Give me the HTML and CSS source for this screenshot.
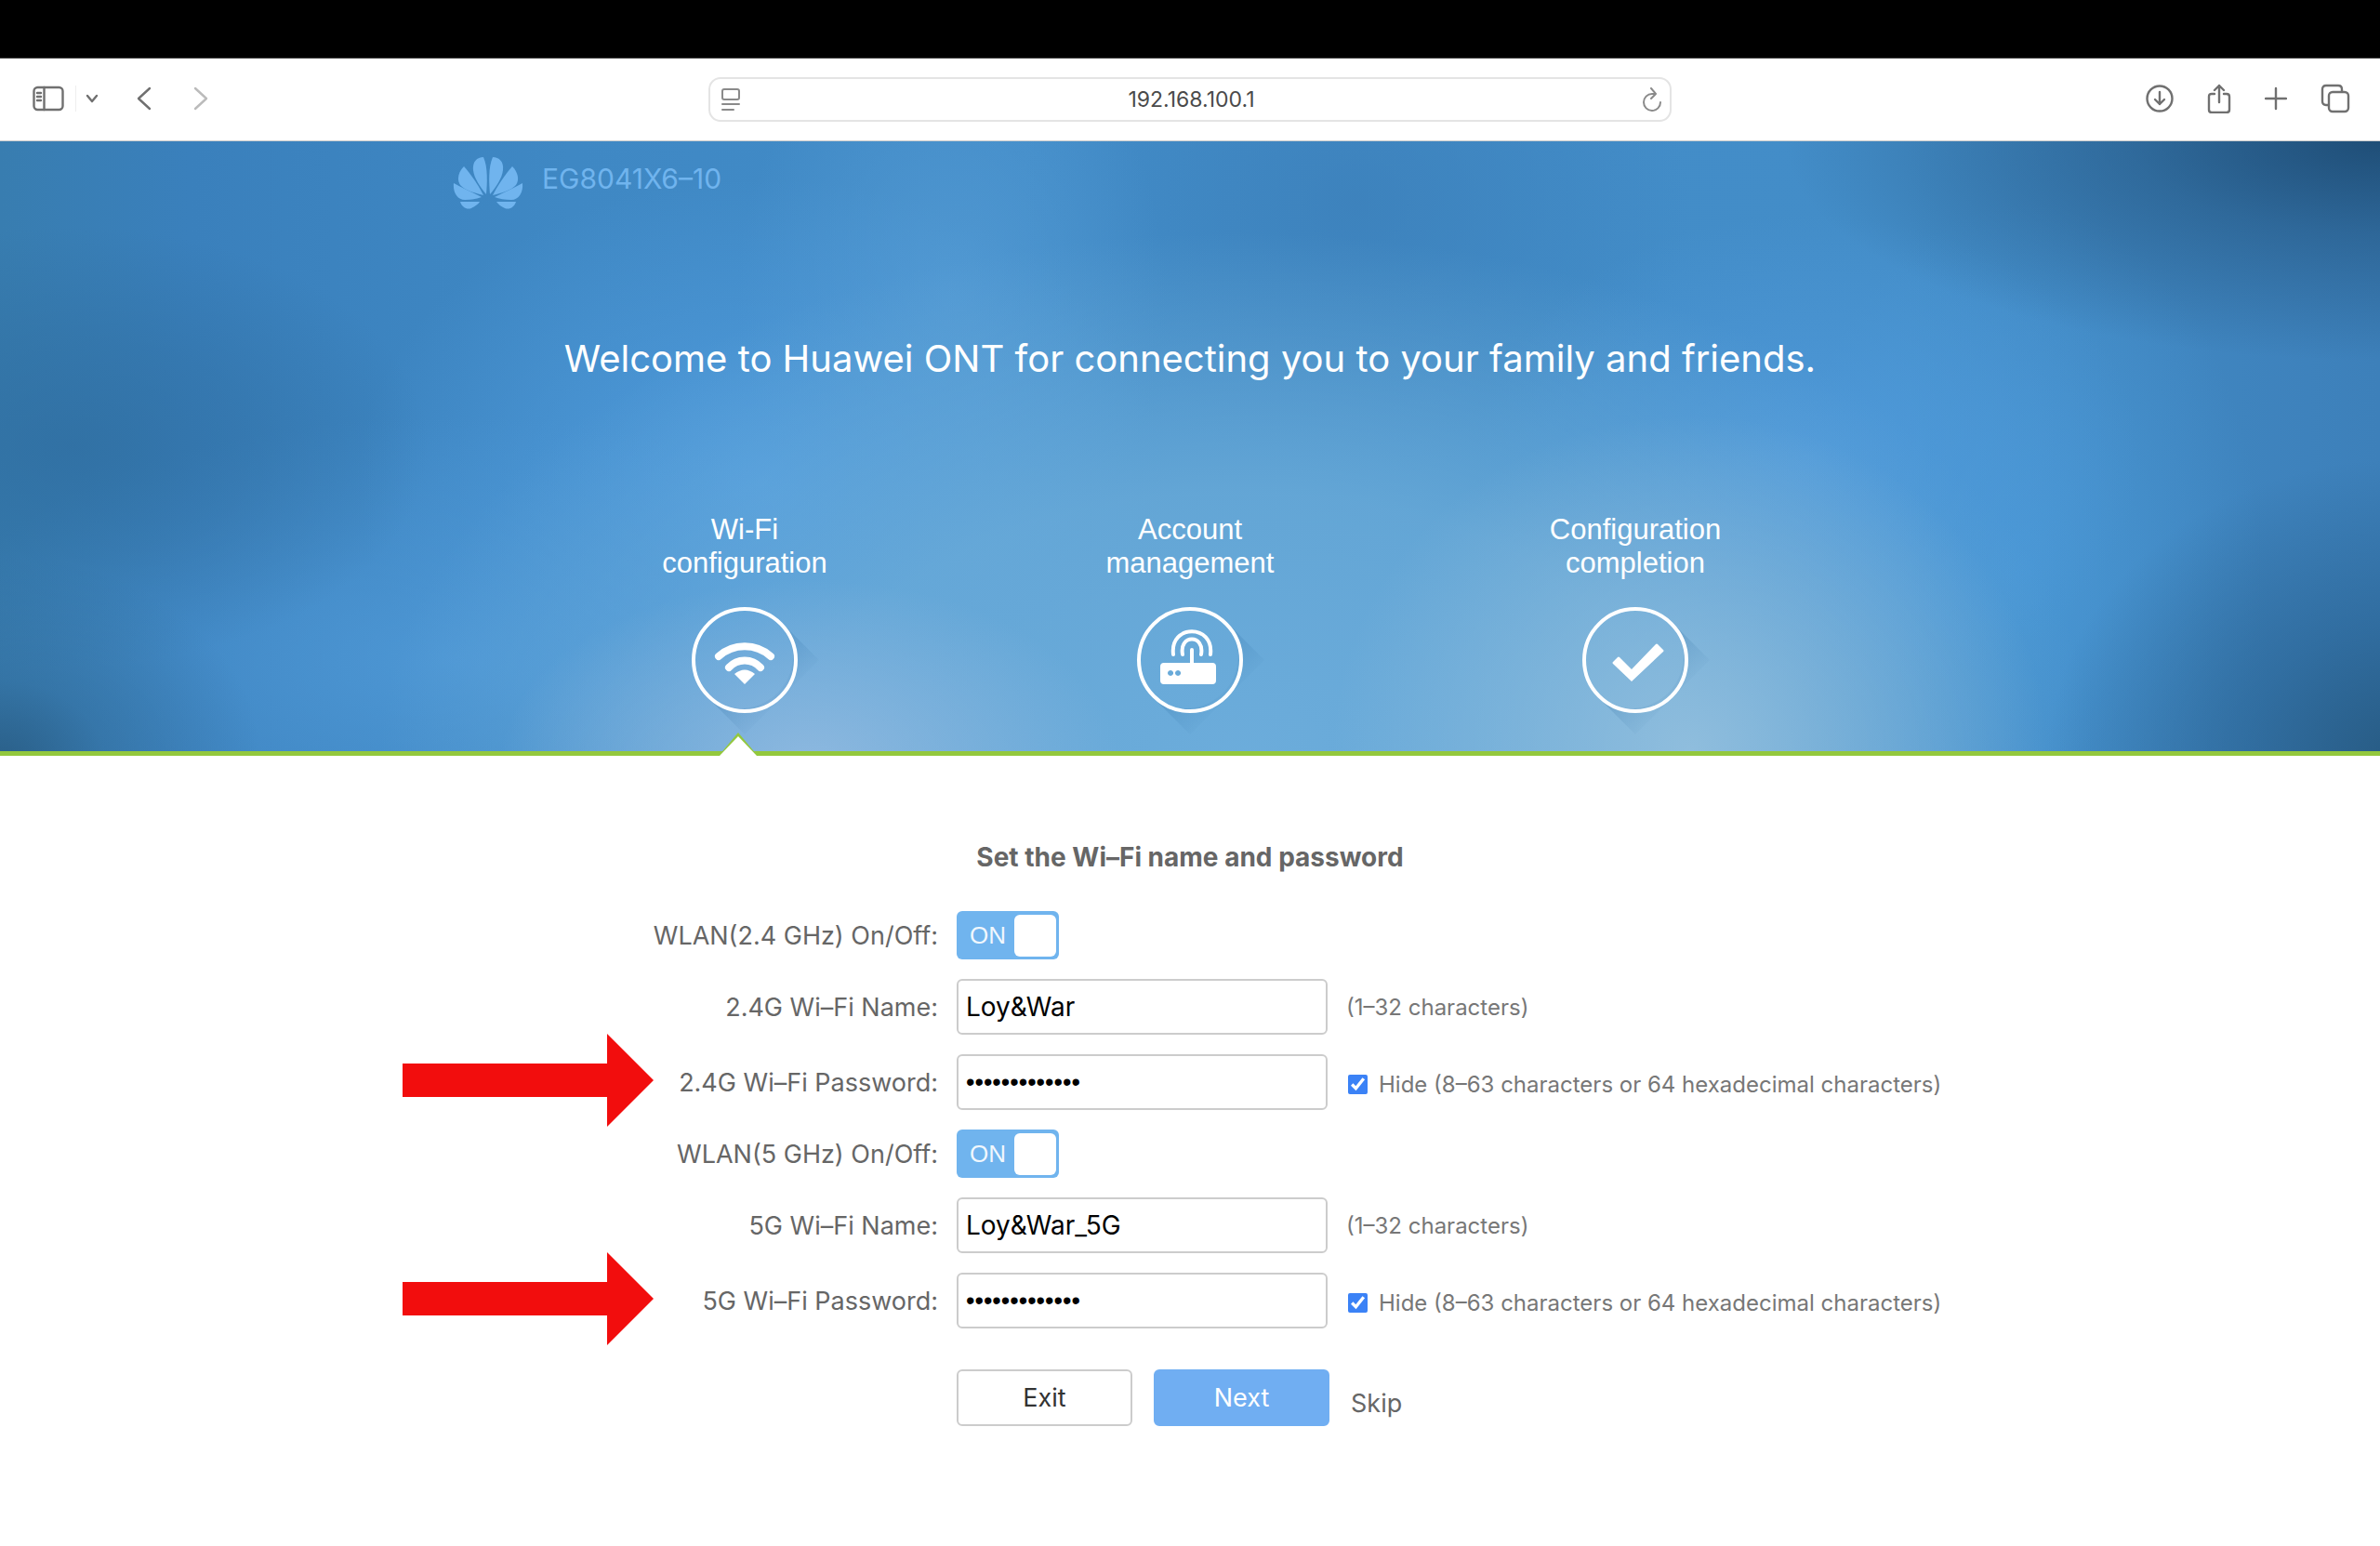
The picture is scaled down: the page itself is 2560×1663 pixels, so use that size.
FILE: index.html
```html
<!DOCTYPE html>
<html lang="en">

<head>
    <meta charset="UTF-8">
    <meta name="viewport" content="width=device-width, initial-scale=1.0">
    <title>EG8041X6-10</title>
    <link rel="stylesheet" href="styles.css">
</head>

<body>
    <div class="top-strip"></div>

    <header class="browser-bar">
        <div class="bar-left">
            <button class="icon-btn sidebar-btn" aria-label="Sidebar">
                <svg width="34" height="28" viewBox="0 0 34 28">
                    <rect x="1.5" y="2" width="31" height="24" rx="4" />
                    <path d="M12.5 2v24M5 8h4M5 12h4M5 16h4" />
                </svg>
            </button>
            <button class="icon-btn menu-btn" aria-label="Tab groups">
                <svg width="14" height="10" viewBox="0 0 14 10">
                    <path d="M2 2l5 6 5-6" />
                </svg>
            </button>
            <button class="icon-btn back-btn" aria-label="Back">
                <svg width="16" height="26" viewBox="0 0 16 26">
                    <path d="M14 2L2 13l12 11" />
                </svg>
            </button>
            <button class="icon-btn forward-btn" aria-label="Forward">
                <svg width="16" height="26" viewBox="0 0 16 26">
                    <path d="M2 2l12 11L2 24" />
                </svg>
            </button>
        </div>

        <div class="address">
            <svg width="22" height="26" viewBox="0 0 22 26">
                <rect x="2" y="2" width="18" height="11" rx="2" />
                <path d="M2 18h18M2 24h12" />
            </svg>
            <input type="text" class="address-input" aria-label="Address" value="192.168.100.1">
            <button class="icon-btn" aria-label="Reload">
                <svg width="22" height="26" viewBox="0 0 22 26">
                    <path d="M14 7h-3a9 9 0 1 0 9 9M10 1l5 6-5 5" />
                </svg>
            </button>
        </div>

        <div class="bar-right">
            <button class="icon-btn" aria-label="Downloads">
                <svg width="30" height="32" viewBox="0 0 30 32">
                    <circle cx="15" cy="16" r="13.5" />
                    <path d="M15 9v13M10 17l5 5 5-5" />
                </svg>
            </button>
            <button class="icon-btn" aria-label="Share">
                <svg width="26" height="32" viewBox="0 0 26 32">
                    <path d="M8 11H5q-3 0-3 3v14q0 3 3 3h16q3 0 3-3V14q0-3-3-3h-3M13 20V2M8 7l5-5 5 5" />
                </svg>
            </button>
            <button class="icon-btn" aria-label="New tab">
                <svg width="24" height="32" viewBox="0 0 24 32">
                    <path d="M12 5v22M1 16h22" />
                </svg>
            </button>
            <button class="icon-btn" aria-label="Tab overview">
                <svg width="32" height="32" viewBox="0 0 32 32">
                    <rect x="9" y="9" width="21" height="21" rx="4" />
                    <path d="M8 23H6q-4 0-4-4V6q0-4 4-4h13q4 0 4 4v2" />
                </svg>
            </button>
        </div>
    </header>

    <section class="hero">
        <div class="brand">
            <svg class="logo" width="76" height="58" viewBox="0 0 76 58">
                <g id="petals">
                    <path d="M36 41C37 30 38 12 33 1C26 1 21 6 22 15C23 24 30 34 36 41Z" />
                    <path d="M33 42C28 32 20 20 12 11C6 17 4 25 8 31C13 37 25 40 33 42Z" />
                    <path d="M31 44C21 39 10 34 1 29C0 39 5 47 13 47C20 47 26 46 31 44Z" />
                    <path d="M29 49H8C10 55 15 58 20 56C24 54 27 52 29 49Z" />
                </g>
                <use href="#petals" transform="matrix(-1 0 0 1 76 0)" />
            </svg>
            <span class="model">EG8041X6–10</span>
        </div>

        <h1 class="welcome">Welcome to Huawei ONT for connecting you to your family and friends.</h1>

        <ol class="steps">
            <li class="step">
                <span>Wi-Fi<br>configuration</span>
                <svg width="116" height="116" viewBox="0 0 116 116">
                    <defs>
                        <linearGradient id="fade" x1="0.3" y1="0.3" x2="1" y2="1">
                            <stop offset="0" stop-color="#1f5f96" stop-opacity="0.25" />
                            <stop offset="0.6" stop-color="#1f5f96" stop-opacity="0" />
                        </linearGradient>
                    </defs>
                    <path class="shadow" d="M98 18l40 40-80 80-40-40A57 57 0 0 0 98 18z" />
                    <circle cx="58" cy="58" r="55" />
                    <path class="thick" d="M30 54a42 42 0 0 1 56 0M41 66a23 23 0 0 1 34 0" />
                    <path class="solid" d="M47 73q11-9 22 0L58 84z" />
                </svg>
                <svg class="notch" width="42" height="25" viewBox="0 0 42 25">
                    <path d="M0 25L21 0l21 25z" fill="#93c83d" />
                    <path d="M1 25L21 4l20 21z" fill="#fff" />
                </svg>
            </li>
            <li class="step">
                <span>Account<br>management</span>
                <svg width="116" height="116" viewBox="0 0 116 116">
                    <path class="shadow" d="M98 18l40 40-80 80-40-40A57 57 0 0 0 98 18z" />
                    <circle cx="58" cy="58" r="55" />
                    <path d="M40 52C36 19 84 19 80 52M50 52C46 30 74 30 70 52M60 47v16" />
                    <path class="solid" fill-rule="evenodd" d="M30 61h52q4 0 4 4v15q0 4-4 4H30q-4 0-4-4V65q0-4 4-4zM37 69a3 3 0 1 0 .1 0zM45 69a3 3 0 1 0 .1 0z" />
                </svg>
            </li>
            <li class="step">
                <span>Configuration<br>completion</span>
                <svg width="116" height="116" viewBox="0 0 116 116">
                    <path class="shadow" d="M98 18l40 40-80 80-40-40A57 57 0 0 0 98 18z" />
                    <circle cx="58" cy="58" r="55" />
                    <path class="solid" d="M34 62q-1-1 0-2l5-5q1-1 2 0l13 13 26-27q1-1 2 0l6 6q1 1 0 2L54 81z" />
                </svg>
            </li>
        </ol>
    </section>

    <form class="wifi-form">
        <h2 class="form-title">Set the Wi–Fi name and password</h2>

        <div class="row">
            <label for="wlan24">WLAN(2.4 GHz) On/Off:</label>
            <button type="button" id="wlan24" class="toggle">ON<i></i></button>
        </div>
        <div class="row">
            <label for="name24">2.4G Wi–Fi Name:</label>
            <input type="text" id="name24" class="field" value="Loy&amp;War">
            <span class="hint">(1–32 characters)</span>
        </div>
        <div class="row">
            <svg class="arrow" width="270" height="100" viewBox="0 0 270 100">
                <path d="M0 32h220V0l50 50-50 50V68H0z" />
            </svg>
            <label for="pass24">2.4G Wi–Fi Password:</label>
            <input type="password" id="pass24" class="field" value="password12345">
            <label class="hint hide"><input type="checkbox" checked>Hide (8–63 characters or 64 hexadecimal characters)</label>
        </div>

        <div class="row">
            <label for="wlan5">WLAN(5 GHz) On/Off:</label>
            <button type="button" id="wlan5" class="toggle">ON<i></i></button>
        </div>
        <div class="row">
            <label for="name5">5G Wi–Fi Name:</label>
            <input type="text" id="name5" class="field" value="Loy&amp;War_5G">
            <span class="hint">(1–32 characters)</span>
        </div>
        <div class="row">
            <svg class="arrow" width="270" height="100" viewBox="0 0 270 100">
                <path d="M0 32h220V0l50 50-50 50V68H0z" />
            </svg>
            <label for="pass5">5G Wi–Fi Password:</label>
            <input type="password" id="pass5" class="field" value="password12345">
            <label class="hint hide"><input type="checkbox" checked>Hide (8–63 characters or 64 hexadecimal characters)</label>
        </div>

        <div class="row actions">
            <div class="buttons">
                <button type="button" class="btn">Exit</button>
                <button type="button" class="btn next">Next</button>
                <a href="#" class="skip">Skip</a>
            </div>
        </div>
    </form>
</body>

</html>
```

FILE: styles.css
```css
* {
    box-sizing: border-box;
}

body {
    margin: 0;
    background: #fff;
    font-family: Inter, "Liberation Sans", sans-serif;
    color: #666;
}

button,
input {
    font-family: inherit;
}

.top-strip {
    height: 62px;
    background: #000;
}

/* Browser bar */

.browser-bar {
    display: grid;
    grid-template-columns: 1fr 1036px 1fr;
    align-items: center;
    height: 90px;
    padding: 0 32px;
    border-top: 1px solid #444;
    border-bottom: 1px solid #ccc;
}

.bar-left,
.bar-right {
    display: flex;
    align-items: center;
    padding-bottom: 2px;
}

.bar-right {
    justify-content: flex-end;
    gap: 36px;
}

.icon-btn {
    display: flex;
    padding: 0;
    border: none;
    background: none;
}

.browser-bar svg {
    fill: none;
    stroke: #707070;
    stroke-width: 2.4;
    stroke-linecap: round;
    stroke-linejoin: round;
}

.sidebar-btn {
    padding: 0 12px 0 3px;
    border-right: 1px solid #eee;
}

.menu-btn {
    margin-left: 10px;
}

.back-btn {
    margin-left: 41px;
}

.forward-btn {
    margin-left: 45px;
}

.browser-bar .forward-btn svg {
    stroke: #bbb;
}

.address {
    display: flex;
    align-items: center;
    height: 48px;
    padding: 0 8px 0 11px;
    border: 2px solid #e4e4e4;
    border-radius: 13px;
}

.browser-bar .address svg {
    stroke: #8a8a8a;
    stroke-width: 2;
}

.address-input {
    flex: 1;
    min-width: 0;
    border: none;
    outline: none;
    background: none;
    font-size: 23px;
    text-align: center;
    color: #4a4a4a;
}

/* Banner */

.hero {
    height: 661px;
    padding-top: 16px;
    border-bottom: 5px solid #93c83d;
    background:
        radial-gradient(ellipse 25% 36% at 100% 0%, #1f4e77 0%, rgba(31, 78, 119, 0.5) 42%, rgba(31, 78, 119, 0) 100%),
        radial-gradient(ellipse 15% 50% at 101% 102%, #275a82 0%, rgba(40, 96, 142, 0.6) 45%, rgba(50, 115, 165, 0) 100%),
        radial-gradient(ellipse 11% 34% at 0% 102%, #2a5f88 0%, rgba(46, 104, 150, 0.5) 40%, rgba(56, 122, 176, 0) 100%),
        radial-gradient(ellipse 15% 36% at 3% 50%, rgba(46, 108, 158, 0.7) 0%, rgba(46, 108, 158, 0.4) 50%, rgba(46, 112, 166, 0) 100%),
        radial-gradient(ellipse 13% 30% at 34% 102%, rgba(145, 186, 224, 0.9) 0%, rgba(145, 186, 224, 0) 100%),
        radial-gradient(ellipse 15% 55% at 71% 100%, rgba(148, 192, 222, 0.9) 0%, rgba(148, 186, 222, 0) 100%),
        radial-gradient(ellipse 36% 85% at 52% 100%, rgba(110, 174, 220, 0.95) 0%, rgba(110, 174, 218, 0.75) 50%, rgba(110, 174, 216, 0) 100%),
        radial-gradient(ellipse 22% 40% at 19% 85%, rgba(84, 158, 220, 0.7) 0%, rgba(84, 158, 220, 0) 100%),
        radial-gradient(ellipse 9% 48% at 40% 25%, rgba(90, 160, 216, 0.6) 0%, rgba(90, 160, 216, 0) 100%),
        radial-gradient(ellipse 17% 50% at 32% 56%, rgba(84, 160, 226, 0.8) 0%, rgba(84, 160, 226, 0) 100%),
        radial-gradient(ellipse 14% 40% at 76% 52%, rgba(84, 158, 224, 0.7) 0%, rgba(84, 158, 224, 0) 100%),
        radial-gradient(ellipse 10% 60% at 85% 70%, rgba(76, 156, 218, 0.7) 0%, rgba(76, 156, 218, 0) 100%),
        radial-gradient(ellipse 14% 45% at 57% 10%, rgba(60, 128, 186, 0.8) 0%, rgba(60, 128, 186, 0) 100%),
        linear-gradient(to right, #387db0, #3a80bc 8%, #3f88c4 24%, #428cc8 45%, #438dc8 80%, #3d80ba);
}

.brand,
.steps {
    width: 1586px;
    margin: 0 auto;
}

.brand {
    display: flex;
    gap: 20px;
}

.logo {
    fill: #70b4ee;
}

.model {
    font-size: 30px;
    line-height: 48px;
    color: #70b4ee;
}

.welcome {
    margin: 132px 0 0;
    font-size: 40px;
    font-weight: 400;
    line-height: 56px;
    text-align: center;
    color: #fff;
}

.steps {
    display: flex;
    justify-content: center;
    margin-top: 138px;
    padding: 0;
    list-style: none;
}

.step {
    position: relative;
    display: flex;
    flex-direction: column;
    align-items: center;
    gap: 28px;
    width: 479px;
    height: 261px;
    font-family: "Liberation Sans", Arial, sans-serif;
    font-size: 31px;
    line-height: 36px;
    text-align: center;
    color: #fff;
}

.step svg {
    overflow: visible;
    fill: none;
    stroke: #fff;
    stroke-width: 4;
    stroke-linecap: round;
}

.step .thick {
    stroke-width: 8;
}

.step .solid {
    fill: #fff;
    stroke: none;
}

.step .shadow {
    fill: url(#fade);
    stroke: none;
}

/* marks the current step */
.step .notch {
    position: absolute;
    bottom: 0;
    left: 50%;
    margin-left: -28px;
    stroke: none;
}

/* Form */

.wifi-form {
    padding-top: 88px;
}

.form-title {
    margin: 0 0 37px;
    font-size: 28px;
    font-weight: 700;
    line-height: 42px;
    text-align: center;
}

.row {
    position: relative;
    display: grid;
    grid-template-columns: 1009fr 399px 1112fr;
    column-gap: 20px;
    align-items: center;
    margin-bottom: 21px;
    font-size: 27px;
}

.row > label:first-of-type {
    text-align: right;
}

.field {
    width: 100%;
    height: 60px;
    padding: 0 8px;
    border: 2px solid #ccc;
    border-radius: 6px;
    font-size: 28px;
    color: #000;
}

.field[type="password"] {
    font-family: "Liberation Sans", Arial, sans-serif;
    font-size: 27px;
}

.toggle {
    display: flex;
    align-items: center;
    justify-content: space-between;
    width: 110px;
    height: 52px;
    padding: 0 3px 0 14px;
    border: none;
    border-radius: 6px;
    background: #70b4ee;
    font-family: "Liberation Sans", Arial, sans-serif;
    font-size: 26px;
    color: #f0f7fd;
}

.toggle i {
    width: 45px;
    height: 45px;
    border-radius: 6px;
    background: #fff;
}

.hint {
    font-size: 24px;
    color: #777;
}

.hide {
    display: flex;
    align-items: center;
    gap: 12px;
    padding-top: 4px;
}

.hide input {
    width: 21px;
    height: 21px;
    margin: 0 0 0 2px;
    accent-color: #3b82f6;
}

.arrow {
    position: absolute;
    left: calc(50% - 847px);
    top: -22px;
    fill: #f20d0d;
}

.actions {
    margin-top: 44px;
}

.buttons {
    grid-column: 2 / 4;
    display: flex;
    align-items: center;
    gap: 23px;
}

.btn {
    width: 189px;
    height: 61px;
    border: 2px solid #ccc;
    border-radius: 6px;
    background: #fff;
    font-size: 27px;
    color: #333;
}

.next {
    border-color: #70aef2;
    background: #70aef2;
    color: #fff;
}

.skip {
    padding-top: 12px;
    font-size: 27px;
    color: #666;
    text-decoration: none;
}
```
